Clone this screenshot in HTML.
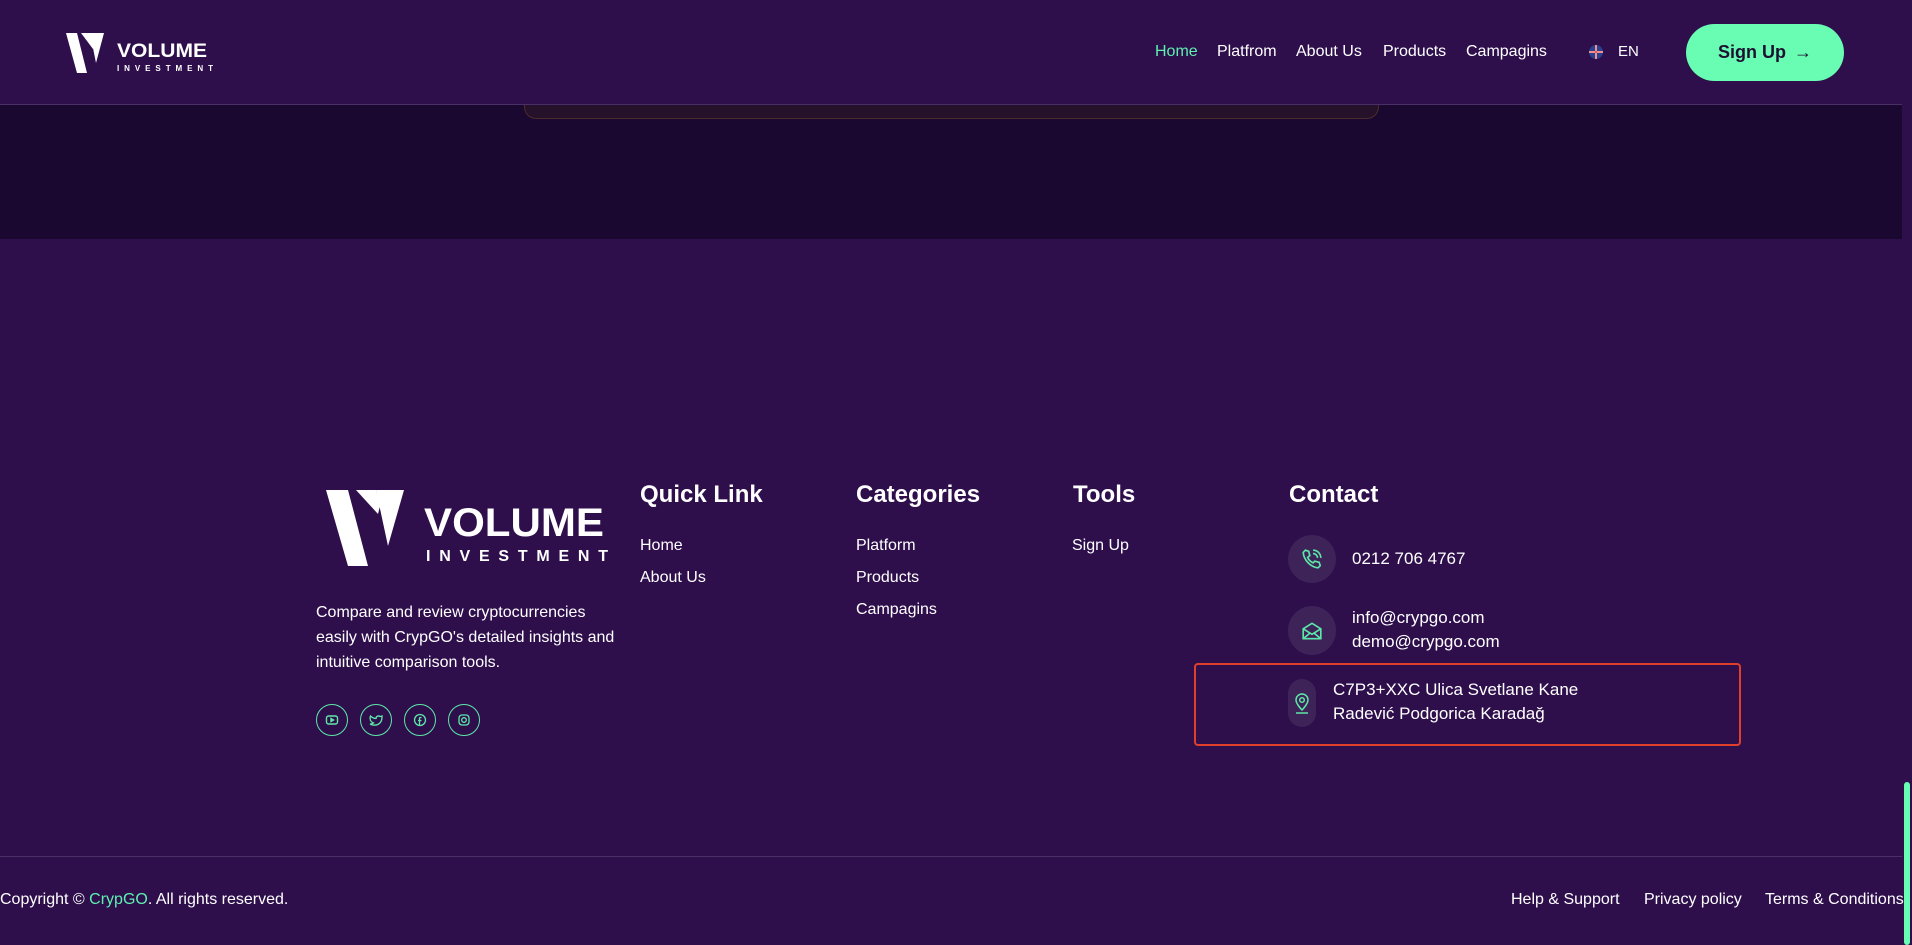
<!DOCTYPE html>
<html><head><meta charset="utf-8"><style>
*{margin:0;padding:0;box-sizing:border-box}
body{width:1912px;height:945px;overflow:hidden;background:#2e0f4c;font-family:"Liberation Sans",sans-serif;color:#fff;position:relative}
.a{position:absolute;white-space:nowrap}
.hdr{position:absolute;left:0;top:0;width:1902px;height:105px;background:#2e0f4c;border-bottom:1px solid #4a2f66}
.dark{position:absolute;left:0;top:105px;width:1902px;height:134px;background:#1b0830}
.card{position:absolute;left:524px;top:100px;width:855px;height:19px;background:#26112a;border:1px solid #4a2d2a;border-top:none;border-radius:0 0 12px 12px}
.nav{font-size:16px;top:43px}
.btn{left:1686px;top:24px;width:158px;height:57px;border-radius:29px;background:#69fdb3;color:#1d1030;font-weight:bold;font-size:18px;display:flex;align-items:center;justify-content:center;gap:8px}
h3{position:absolute;font-size:24px;font-weight:bold;top:481px}
.l{font-size:16px}
.soc{position:absolute;top:704px;width:32px;height:32px;border:1px solid #5ee8a8;border-radius:50%;display:flex;align-items:center;justify-content:center}
.ic{position:absolute;background:#3d2358;border-radius:50%;display:flex;align-items:center;justify-content:center}
.ct{font-family:"Liberation Sans",sans-serif;font-size:17px}
</style></head><body>
<div class="dark"></div>
<div class="card"></div>
<div class="hdr"></div>
<svg class="a" style="left:64px;top:31px" width="152" height="44" viewBox="0 0 152 44">
<path d="M2 2h11l10 40h-10z" fill="#fff"/><path d="M17 2h10l6 22 6-22h-6l-4 16z" fill="#fff"/>
<path d="M26 2h14l-8 30z" fill="#fff"/>
<text x="53" y="26" font-family="Liberation Sans" font-weight="bold" font-size="19" textLength="90" lengthAdjust="spacingAndGlyphs" fill="#fff">VOLUME</text>
<text x="53" y="40" font-family="Liberation Sans" font-weight="bold" font-size="8" textLength="96" fill="#fff">INVESTMENT</text>
</svg>
<div class="a nav" style="left:1155px;color:#5ef0b0">Home</div>
<div class="a nav" style="left:1217px">Platfrom</div>
<div class="a nav" style="left:1296px">About Us</div>
<div class="a nav" style="left:1383px">Products</div>
<div class="a nav" style="left:1466px">Campagins</div>
<svg class="a" style="left:1589px;top:45px" width="14" height="14" viewBox="0 0 14 14"><circle cx="7" cy="7" r="7" fill="#2a3f8f"/><path d="M6 0h2v14H6zM0 6h14v2H0z" fill="#fff"/><path d="M6.5 0h1v14h-1zM0 6.5h14v1H0z" fill="#d22"/></svg>
<div class="a" style="left:1618px;top:43px;font-size:15px">EN</div>
<div class="a btn">Sign Up <span style="font-weight:normal">→</span></div>
<div class="a" style="left:1902px;top:0;width:10px;height:945px;background:#2e0f4c"></div>
<div class="a" style="left:1904px;top:782px;width:6px;height:163px;background:#69fdb3;border-radius:3px"></div>
<svg class="a" style="left:324px;top:486px" width="290" height="84" viewBox="0 0 290 84">
<path d="M2 4h22l20 76h-20z" fill="#fff"/><path d="M32 4h20l10 38 10-38h-12l-6 24z" fill="#fff"/>
<path d="M52 4h28l-16 56z" fill="#fff"/>
<text x="100" y="50" font-family="Liberation Sans" font-weight="bold" font-size="40" textLength="180" lengthAdjust="spacingAndGlyphs" fill="#fff">VOLUME</text>
<text x="102" y="75" font-family="Liberation Sans" font-weight="bold" font-size="16" textLength="182" fill="#fff">INVESTMENT</text>
</svg>
<div class="a" style="left:316px;top:600px;font-size:16px;line-height:25px;white-space:normal;width:310px">Compare and review cryptocurrencies easily with CrypGO's detailed insights and intuitive comparison tools.</div>
<div class="soc" style="left:316px"><svg width="14" height="14" viewBox="0 0 14 14" fill="none" stroke="#5ee8a8" stroke-width="1.4"><rect x="1.5" y="3" width="11" height="8" rx="2"/><path d="M6 5.5v3l2.5-1.5z" fill="#5ee8a8"/></svg></div>
<div class="soc" style="left:360px"><svg width="14" height="14" viewBox="0 0 14 14" fill="none" stroke="#5ee8a8" stroke-width="1.3"><path d="M13 3c-1 .5-1.5.5-2 .5A2.5 2.5 0 0 0 7 5.5C4.5 5.5 3 4.5 1.5 3c0 0-2 5 3 7-1 .7-2.3 1-3.5 1 6 3 12 0 12-7z"/></svg></div>
<div class="soc" style="left:404px"><svg width="14" height="14" viewBox="0 0 14 14" fill="none" stroke="#5ee8a8" stroke-width="1.3"><circle cx="7" cy="7" r="5.5"/><path d="M8.5 4.5h-1a1 1 0 0 0-1 1V12M5 7.5h3.5"/></svg></div>
<div class="soc" style="left:448px"><svg width="14" height="14" viewBox="0 0 14 14" fill="none" stroke="#5ee8a8" stroke-width="1.3"><rect x="2" y="2" width="10" height="10" rx="3"/><circle cx="7" cy="7" r="2.3"/></svg></div>
<h3 style="left:640px">Quick Link</h3>
<h3 style="left:856px">Categories</h3>
<h3 style="left:1073px">Tools</h3>
<h3 style="left:1289px">Contact</h3>
<div class="a l" style="left:640px;top:537px">Home</div>
<div class="a l" style="left:640px;top:569px">About Us</div>
<div class="a l" style="left:856px;top:537px">Platform</div>
<div class="a l" style="left:856px;top:569px">Products</div>
<div class="a l" style="left:856px;top:601px">Campagins</div>
<div class="a l" style="left:1072px;top:537px">Sign Up</div>
<div class="ic" style="left:1288px;top:535px;width:48px;height:48px"><svg width="22" height="22" viewBox="0 0 20 20" fill="none" stroke="#5ee8a8" stroke-width="1.5"><path d="M4 2l3 1 1 4-2 1.5c1 2.5 2.5 4 5 5L12.5 12l4 1 1 3-2 2C9 17.5 2.5 11 2 4z"/><path d="M11 2a7 7 0 0 1 7 7M11 5a4 4 0 0 1 4 4"/></svg></div>
<div class="a ct" style="left:1352px;top:549px">0212 706 4767</div>
<div class="ic" style="left:1288px;top:606px;width:48px;height:49px"><svg width="22" height="22" viewBox="0 0 20 20" fill="none" stroke="#5ee8a8" stroke-width="1.5"><path d="M2 8l8-5 8 5v9H2z"/><path d="M2 8l8 5 8-5M2 17l6-5M18 17l-6-5"/></svg></div>
<div class="a ct" style="left:1352px;top:608px">info@crypgo.com</div>
<div class="a ct" style="left:1352px;top:632px">demo@crypgo.com</div>
<div class="ic" style="left:1288px;top:679px;width:28px;height:48px;border-radius:14px"><svg width="18" height="24" viewBox="0 0 18 22" fill="none" stroke="#5ee8a8" stroke-width="1.5"><path d="M9 18s6-6 6-10A6 6 0 0 0 3 8c0 4 6 10 6 10z"/><circle cx="9" cy="8" r="2.3"/><path d="M3 21h12"/></svg></div>
<div class="a ct" style="left:1333px;top:680px">C7P3+XXC Ulica Svetlane Kane</div>
<div class="a ct" style="left:1333px;top:704px">Radević Podgorica Karadağ</div>
<div class="a" style="left:1194px;top:663px;width:547px;height:83px;border:2px solid #e0402a;border-radius:4px"></div>
<div class="a" style="left:0;top:856px;width:1902px;height:1px;background:#4a3066"></div>
<div class="a" style="left:0;top:891px;font-size:16px">Copyright © <span style="color:#5ef0b0">CrypGO</span>. All rights reserved.</div>
<div class="a" style="left:1511px;top:891px;font-size:16px">Help &amp; Support</div>
<div class="a" style="left:1644px;top:891px;font-size:16px">Privacy policy</div>
<div class="a" style="left:1765px;top:891px;font-size:16px">Terms &amp; Conditions</div>
</body></html>
